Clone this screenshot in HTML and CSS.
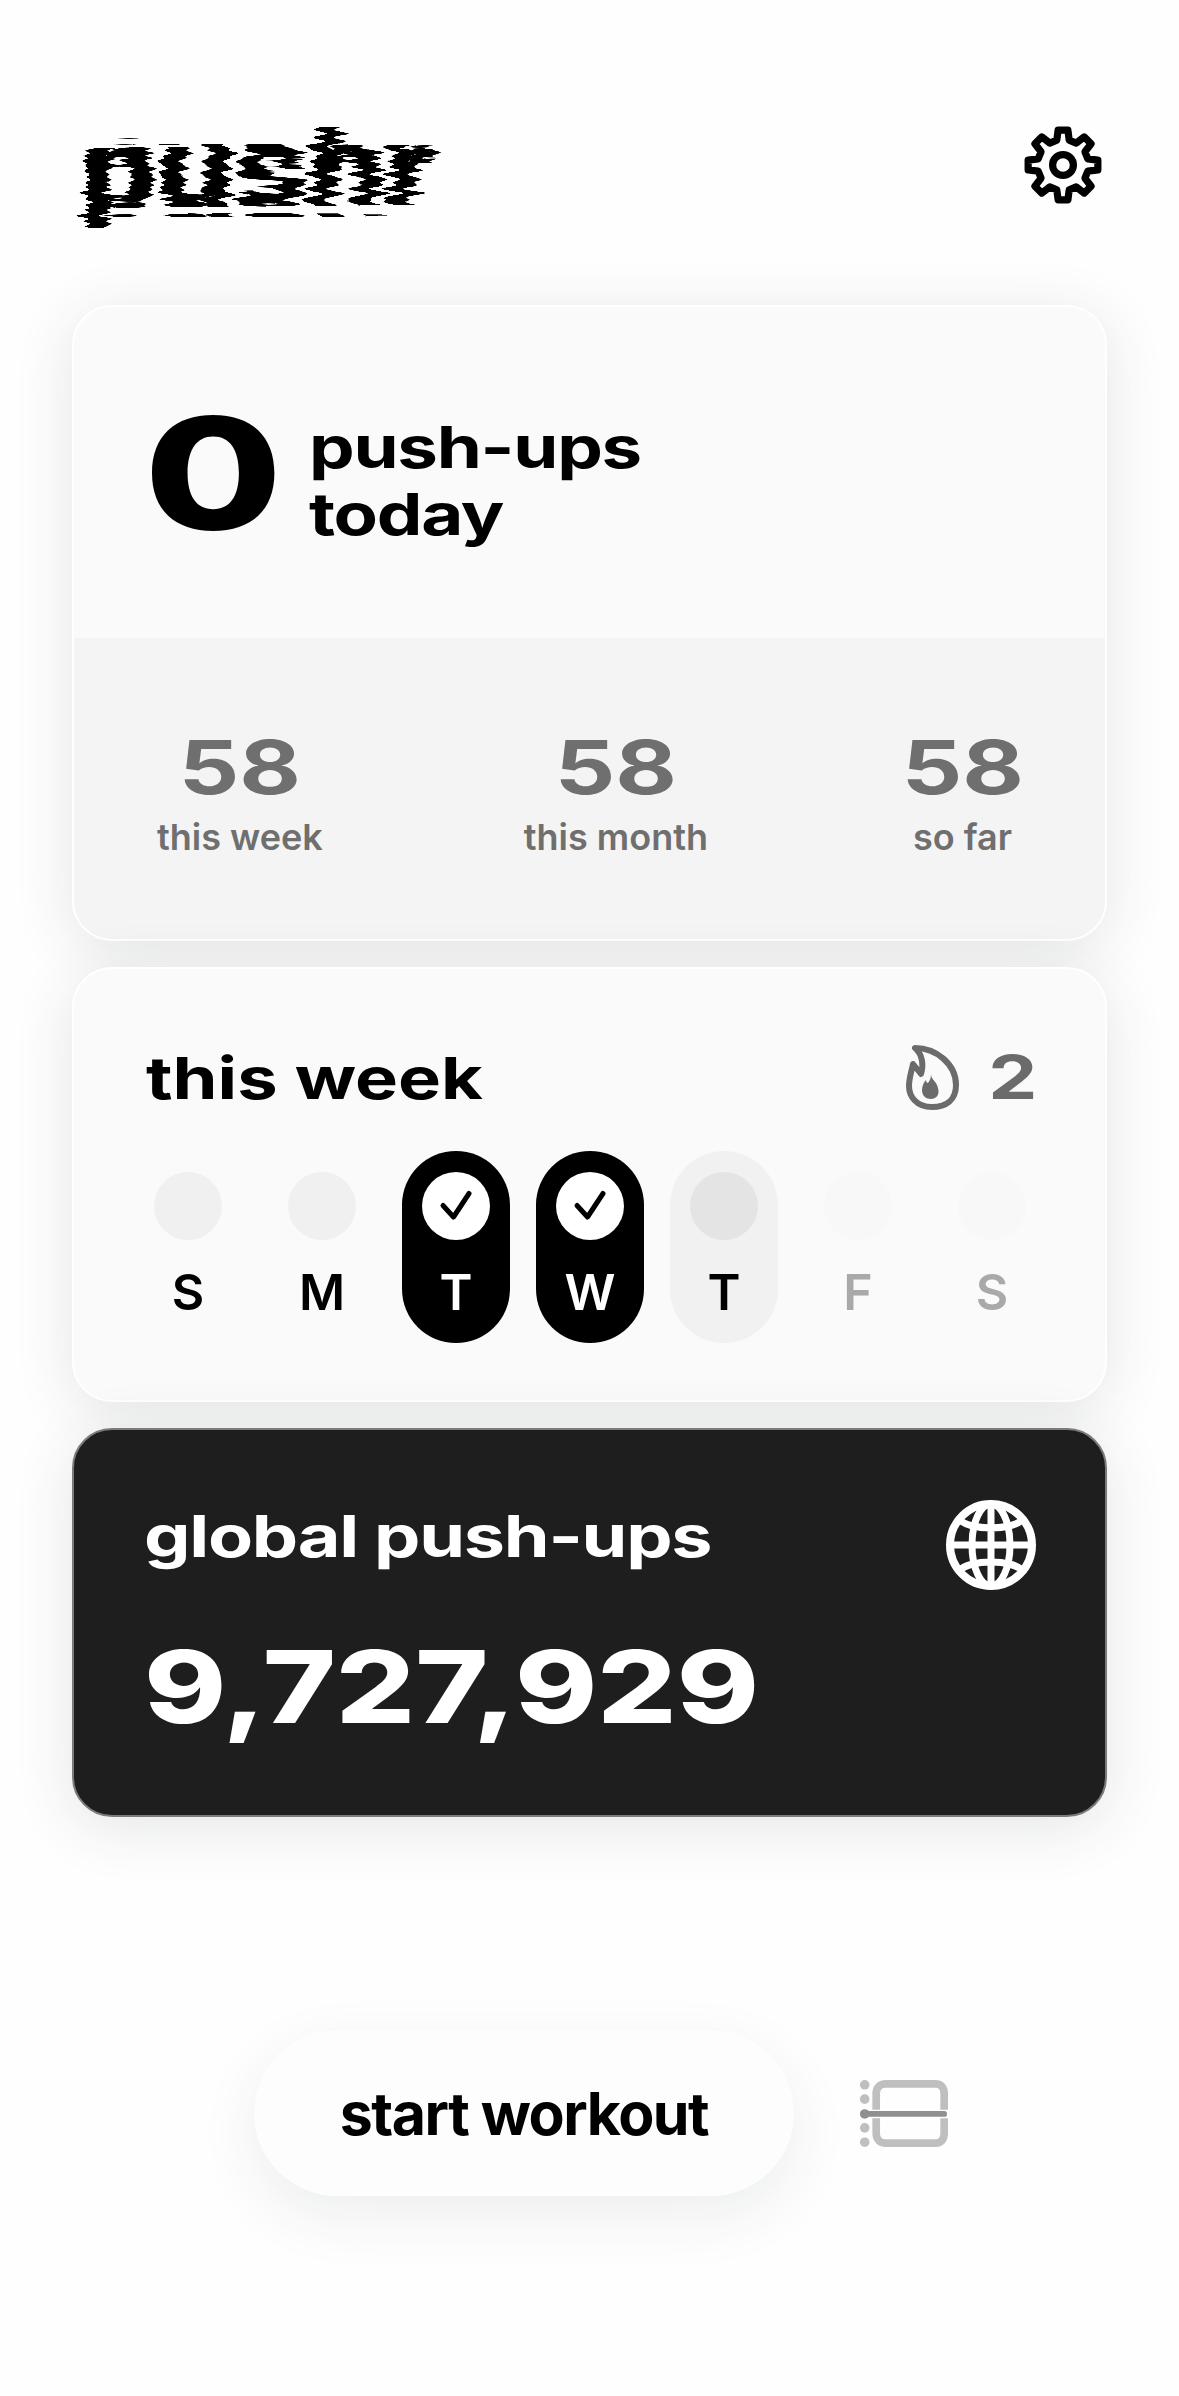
FILE: index.html
```html
<!DOCTYPE html>
<html lang="en">
<head>
    <meta charset="UTF-8">
    <meta name="viewport" content="width=device-width, initial-scale=1.0">
    <title>pushr</title>
    <link rel="stylesheet" href="styles.css">
</head>
<body>
    <svg class="defs" width="0" height="0" aria-hidden="true">
        <filter id="glitch" x="-15%" y="-15%" width="130%" height="130%">
            <feMorphology in="SourceGraphic" operator="dilate" radius="2 0.4" result="fat"/>
            <feTurbulence type="fractalNoise" baseFrequency="0.003 0.22" numOctaves="1" seed="4" result="noise"/>
            <feDisplacementMap in="fat" in2="noise" scale="44" xChannelSelector="R" yChannelSelector="A"/>
        </filter>
    </svg>

    <div class="page">
        <header class="top">
            <h1 class="logo">pushr</h1>
            <svg class="gear" viewBox="0 0 100 100" fill="none" stroke="#000" stroke-width="9" stroke-linejoin="round">
                <polygon points="42.26,18.95 43.88,6.43 56.12,6.43 57.74,18.95 66.48,22.57 76.48,14.86 85.14,23.52 77.43,33.52 81.05,42.26 93.57,43.88 93.57,56.12 81.05,57.74 77.43,66.48 85.14,76.48 76.48,85.14 66.48,77.43 57.74,81.05 56.12,93.57 43.88,93.57 42.26,81.05 33.52,77.43 23.52,85.14 14.86,76.48 22.57,66.48 18.95,57.74 6.43,56.12 6.43,43.88 18.95,42.26 22.57,33.52 14.86,23.52 23.52,14.86 33.52,22.57"/>
                <circle cx="50" cy="50" r="13"/>
            </svg>
        </header>

        <section class="card today">
            <div class="today-main">
                <div class="today-count">0</div>
                <div class="today-label">
                    <span>push-ups</span>
                    <span>today</span>
                </div>
            </div>
            <div class="stats">
                <div class="stat"><b>58</b><span>this week</span></div>
                <div class="stat"><b>58</b><span>this month</span></div>
                <div class="stat"><b>58</b><span>so far</span></div>
            </div>
        </section>

        <section class="card week">
            <div class="week-head">
                <h2>this week</h2>
                <div class="streak">
                    <svg class="flame" viewBox="5 22 56 70" fill="none">
                        <path d="M15 28C36 28 56 44 56 65C56 80 46 87 32 87C16 87 9 76 9 66C9 58 12 50 13 44L21 54C24 44 22 34 15 28Z" stroke="#6b6b6b" stroke-width="6" stroke-linejoin="round"/>
                        <path d="M31 54C31 60 36 60 38 68C40 75 36 79 31 79C26 79 22 76 22 70C22 66 24 62 26 60C26 62 27 63 28 63C30 60 31 58 31 54Z" fill="#6b6b6b"/>
                    </svg>
                    <span>2</span>
                </div>
            </div>
            <div class="days">
                <div class="day"><i class="dot"></i><span>S</span></div>
                <div class="day"><i class="dot"></i><span>M</span></div>
                <div class="day done">
                    <i class="dot"><svg viewBox="0 0 40 40" fill="none" stroke="#000" stroke-width="5" stroke-linecap="round" stroke-linejoin="round"><path d="M7 19.500L17.500 31L33 7.500"/></svg></i>
                    <span>T</span>
                </div>
                <div class="day done">
                    <i class="dot"><svg viewBox="0 0 40 40" fill="none" stroke="#000" stroke-width="5" stroke-linecap="round" stroke-linejoin="round"><path d="M7 19.500L17.500 31L33 7.500"/></svg></i>
                    <span>W</span>
                </div>
                <div class="day current"><i class="dot"></i><span>T</span></div>
                <div class="day later"><i class="dot"></i><span>F</span></div>
                <div class="day later"><i class="dot"></i><span>S</span></div>
            </div>
        </section>

        <section class="card global">
            <div class="global-head">
                <h2>global push-ups</h2>
                <svg class="globe" viewBox="0 0 90 90" fill="none" stroke="#fff" stroke-width="7" stroke-linecap="round">
                    <circle cx="45" cy="45" r="41" stroke-width="8"/>
                    <ellipse cx="45" cy="45" rx="19" ry="41"/>
                    <path d="M45 4V86M6 45H84M13 19C23 31 67 31 77 19M13 71C23 59 67 59 77 71"/>
                </svg>
            </div>
            <div class="global-count">9,727,929</div>
        </section>

        <footer class="actions">
            <button class="start">start workout</button>
            <svg class="scan" viewBox="0 0 94 70" fill="none">
                <path d="M19 31V14C19 8 23 4 29 4H81C87 4 90 8 90 14V31M19 40V56C19 62 23 66 29 66H81C87 66 90 62 90 56V40" stroke="#bfbfbf" stroke-width="8"/>
                <path d="M7 35.500H90" stroke="#8f8f8f" stroke-width="6" stroke-linecap="round"/>
                <circle cx="7" cy="5" r="5" fill="#bfbfbf"/>
                <circle cx="7" cy="20" r="5" fill="#bfbfbf"/>
                <circle cx="7" cy="35.500" r="5" fill="#8f8f8f"/>
                <circle cx="7" cy="50" r="5" fill="#bfbfbf"/>
                <circle cx="7" cy="65" r="5" fill="#bfbfbf"/>
            </svg>
        </footer>
    </div>
</body>
</html>
```

FILE: styles.css
```css
* {
    box-sizing: border-box;
}
body {
    margin: 0;
    background: #fefefe;
    font-family: Inter, "Liberation Sans", sans-serif;
    color: #000;
}
h1, h2 {
    margin: 0;
}
.defs {
    display: block;
    height: 0;
}
.page {
    height: 2396px;
    padding: 0 72px;
    overflow: hidden;
}

.top {
    height: 305px;
    padding-top: 114px;
    padding-right: 4px;
    display: flex;
    justify-content: space-between;
    align-items: flex-start;
}
.logo {
    margin-left: 8px;
    font-family: "Liberation Sans", sans-serif;
    font-size: 112px;
    line-height: 110px;
    font-weight: 700;
    transform: scaleX(1.14);
    transform-origin: left;
    filter: url(#glitch);
}
.gear {
    width: 80px;
    height: 80px;
    margin-top: 11px;
}

.card {
    border-radius: 40px;
    border: 2px solid #fff;
    background: #fafafa;
    box-shadow: 0 10px 60px rgba(40, 50, 50, 0.12);
    overflow: hidden;
}

.today {
    height: 636px;
}
.today-main {
    height: 331px;
    padding-left: 70px;
    display: flex;
    align-items: center;
}
.today-count {
    width: 165px;
    font-size: 154px;
    line-height: 1;
    font-weight: 800;
    transform: scaleX(1.3);
    transform-origin: left;
}
.today-label {
    margin-top: 16px;
    display: flex;
    flex-direction: column;
    font-size: 58px;
    line-height: 67px;
    font-weight: 700;
    letter-spacing: -1px;
    transform: scaleX(1.25);
    transform-origin: left;
}
.stats {
    height: 303px;
    background: #f4f4f4;
    padding: 93px 93px 0 83px;
    display: flex;
    justify-content: space-between;
    align-items: flex-start;
}
.stat {
    display: flex;
    flex-direction: column;
    align-items: center;
    color: #6f6f6f;
}
.stat:nth-child(2) {
    margin-right: 4px;
}
.stat b {
    font-size: 74px;
    line-height: 72px;
    font-weight: 700;
    transform: scaleX(1.28);
}
.stat span {
    margin-top: 12px;
    font-size: 36px;
    line-height: 44px;
    font-weight: 600;
}

.week {
    height: 435px;
    margin-top: 26px;
    padding: 64px 60px 0 60px;
}
.week-head {
    display: flex;
    justify-content: space-between;
    align-items: center;
    padding: 0 13px 0 12px;
    height: 90px;
}
.week-head h2 {
    font-size: 58px;
    line-height: 70px;
    font-weight: 700;
    transform: scaleX(1.245);
    transform-origin: left;
}
.streak {
    display: flex;
    align-items: center;
    gap: 33px;
    margin-top: -3px;
    color: #6b6b6b;
}
.flame {
    width: 56px;
    height: 70px;
}
.streak span {
    font-size: 60px;
    line-height: 70px;
    font-weight: 700;
    transform: scaleX(1.3);
}
.days {
    margin-top: 28px;
    display: grid;
    grid-template-columns: repeat(7, 108px);
    gap: 26px;
}
.day {
    height: 192px;
    border-radius: 54px;
    padding-top: 21px;
    display: flex;
    flex-direction: column;
    align-items: center;
}
.dot {
    width: 68px;
    height: 68px;
    border-radius: 50%;
    background: #f0f0f0;
    display: flex;
    align-items: center;
    justify-content: center;
}
.dot svg {
    width: 40px;
    height: 40px;
}
.day span {
    margin-top: 22px;
    font-size: 50px;
    line-height: 60px;
    font-weight: 600;
}
.done {
    background: #000;
    color: #fff;
}
.done .dot {
    background: #fff;
}
.current {
    background: #f1f1f1;
}
.current .dot {
    background: #e4e4e4;
}
.later .dot {
    background: #f8f8f8;
}
.later span {
    color: #a9a9a9;
}

.global {
    height: 389px;
    margin-top: 26px;
    padding: 70px 69px 0 70px;
    background: #1e1e1e;
    border: 2px solid #7b7b7b;
    color: #fff;
}
.global-head {
    display: flex;
    justify-content: space-between;
    align-items: center;
}
.global-head h2 {
    margin-bottom: 18px;
    font-size: 58px;
    line-height: 70px;
    font-weight: 700;
    letter-spacing: -1px;
    transform: scaleX(1.27);
    transform-origin: left;
}
.globe {
    width: 90px;
    height: 90px;
}
.global-count {
    margin-top: 42px;
    font-size: 100px;
    line-height: 110px;
    font-weight: 800;
    transform: scaleX(1.245);
    transform-origin: left;
}

.actions {
    margin-top: 213px;
    display: flex;
    align-items: center;
    padding-left: 182px;
    gap: 64px;
}
.start {
    width: 540px;
    height: 166px;
    border: 0;
    border-radius: 83px;
    background: #fdfdfd;
    box-shadow: 0 20px 60px rgba(40, 50, 50, 0.08);
    font-family: Inter, "Liberation Sans", sans-serif;
    font-size: 59px;
    font-weight: 700;
    letter-spacing: -1.500px;
    color: #000;
}
.scan {
    width: 90px;
    height: 67px;
}
```
